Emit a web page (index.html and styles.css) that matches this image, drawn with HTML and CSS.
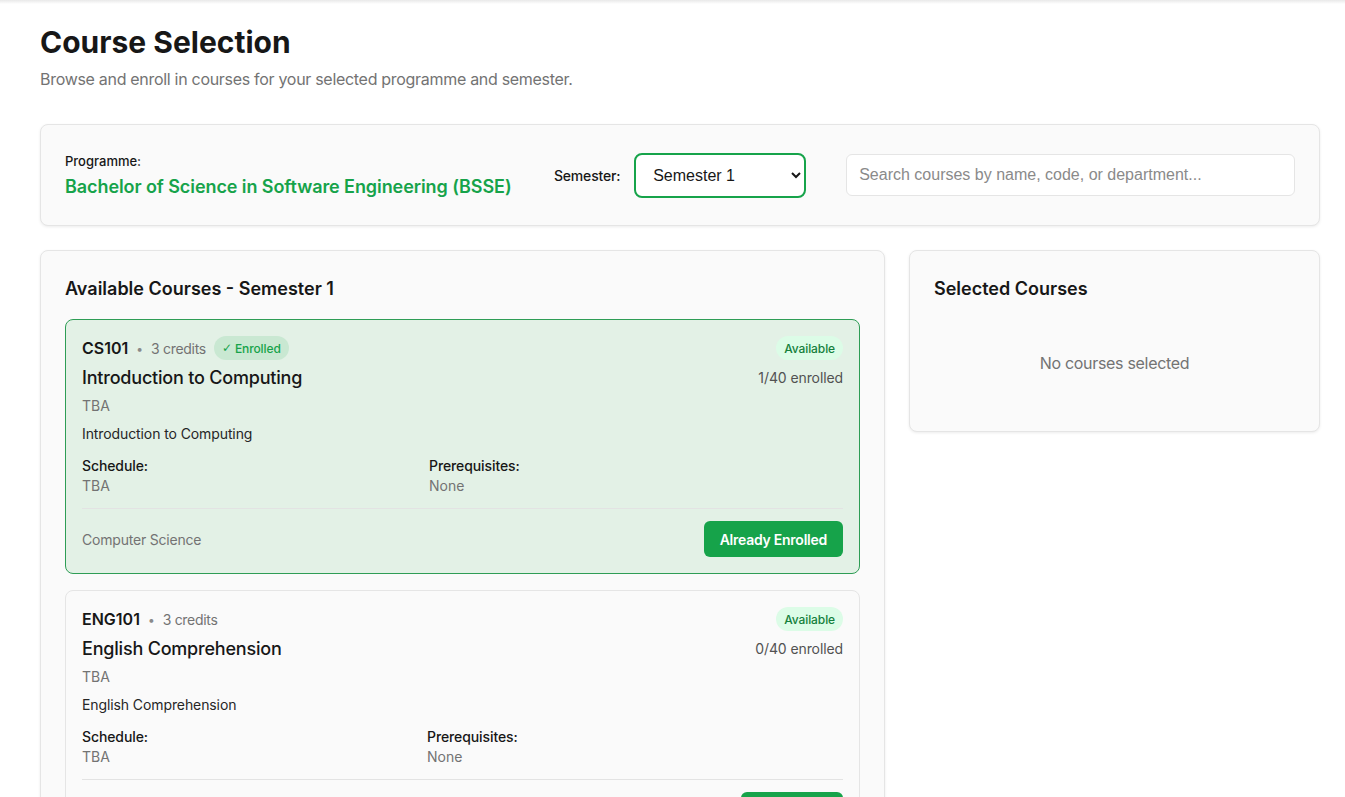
FILE: index.html
```html
<!DOCTYPE html>
<html lang="en">
<head>
<meta charset="utf-8">
<title>Course Selection</title>
<link rel="stylesheet" href="styles.css">
</head>
<body>
<div class="topshade"></div>
<main class="page">
  <h1 class="title">Course Selection</h1>
  <p class="subtitle">Browse and enroll in courses for your selected programme and semester.</p>

  <section class="filters">
    <div class="programme">
      <div class="programme-label">Programme:</div>
      <div class="programme-name">Bachelor of Science in Software Engineering (BSSE)</div>
    </div>
    <div class="semester">
      <label class="semester-label" for="sem">Semester:</label>
      <select id="sem" class="semester-select">
        <option>Semester 1</option>
        <option>Semester 2</option>
      </select>
    </div>
    <input class="search" type="text" placeholder="Search courses by name, code, or department...">
  </section>

  <div class="layout">
    <section class="panel">
      <h2 class="panel-title">Available Courses - Semester 1</h2>
      <div class="course-list">
        <article class="course enrolled">
          <div class="course-head">
            <div class="course-main">
              <div class="code-row">
                <span class="code">CS101</span>
                <span class="dot">•</span>
                <span class="credits">3 credits</span>
                <span class="pill pill-enrolled"><span class="check">✓</span>Enrolled</span>
              </div>
              <div class="course-name">Introduction to Computing</div>
            </div>
            <div class="course-side">
              <span class="pill pill-available">Available</span>
              <div class="count">1/40 enrolled</div>
            </div>
          </div>
          <div class="instructor">TBA</div>
          <div class="desc">Introduction to Computing</div>
          <div class="meta">
            <div class="meta-col">
              <div class="meta-label">Schedule:</div>
              <div class="meta-value">TBA</div>
            </div>
            <div class="meta-col">
              <div class="meta-label">Prerequisites:</div>
              <div class="meta-value">None</div>
            </div>
          </div>
          <div class="course-foot">
            <span class="dept">Computer Science</span>
            <button class="btn">Already Enrolled</button>
          </div>
        </article>

        <article class="course">
          <div class="course-head">
            <div class="course-main">
              <div class="code-row">
                <span class="code">ENG101</span>
                <span class="dot">•</span>
                <span class="credits">3 credits</span>
              </div>
              <div class="course-name">English Comprehension</div>
            </div>
            <div class="course-side">
              <span class="pill pill-available">Available</span>
              <div class="count">0/40 enrolled</div>
            </div>
          </div>
          <div class="instructor">TBA</div>
          <div class="desc">English Comprehension</div>
          <div class="meta meta-alt">
            <div class="meta-col">
              <div class="meta-label">Schedule:</div>
              <div class="meta-value">TBA</div>
            </div>
            <div class="meta-col">
              <div class="meta-label">Prerequisites:</div>
              <div class="meta-value">None</div>
            </div>
          </div>
          <div class="course-foot">
            <span class="dept">Languages</span>
            <button class="btn">Enroll Now</button>
          </div>
        </article>
      </div>
    </section>

    <aside class="panel side-panel">
      <h2 class="panel-title">Selected Courses</h2>
      <p class="empty">No courses selected</p>
    </aside>
  </div>
</main>
</body>
</html>
```

FILE: styles.css
```css
* { box-sizing: border-box; }

html, body {
  margin: 0;
  padding: 0;
  background: #ffffff;
  height: 797px;
  overflow: hidden;
}

body {
  font-family: Inter, "Noto Sans", "Liberation Sans", sans-serif;
  color: #171717;
  position: relative;
}

.topshade {
  position: absolute;
  left: 0;
  right: 0;
  top: 0;
  height: 4px;
  background: linear-gradient(#e9e9e9, rgba(255,255,255,0));
  pointer-events: none;
}

.page {
  padding: 24px 25px 0 40px;
}

.title {
  margin: 0;
  font-size: 30px;
  line-height: 36px;
  font-weight: 700;
  color: #171717;
}

.subtitle {
  margin: 7px 0 0;
  font-size: 16px;
  line-height: 24px;
  letter-spacing: -0.3px;
  color: #737373;
}

.filters {
  margin-top: 33px;
  display: flex;
  align-items: center;
  padding: 24px;
  background: #fafafa;
  border: 1px solid #e5e5e5;
  border-radius: 8px;
  box-shadow: 0 1px 3px rgba(0,0,0,0.08);
  height: 102px;
}

.programme {
  width: 449px;
  flex-shrink: 0;
}

.programme-label {
  font-size: 13px;
  line-height: 24px;
  font-weight: 500;
  color: #171717;
}

.programme-name {
  font-size: 18px;
  line-height: 28px;
  font-weight: 600;
  letter-spacing: -0.08px;
  color: #16a34a;
  white-space: nowrap;
}

.semester {
  margin-left: 40px;
  display: flex;
  align-items: center;
  gap: 14px;
}

.semester-label {
  font-size: 14px;
  font-weight: 500;
  letter-spacing: -0.2px;
  color: #171717;
}

.semester-select {
  width: 172px;
  height: 45px;
  padding: 0 10px 0 13px;
  font-family: "Liberation Sans", Arial, sans-serif;
  font-size: 16px;
  color: #171717;
  background: #ffffff;
  border: 2px solid #16a34a;
  border-radius: 8px;
  outline: none;
}

.search {
  margin-left: 40px;
  flex: 1;
  height: 42px;
  padding: 0 12px;
  font-family: "Liberation Sans", Arial, sans-serif;
  font-size: 16px;
  background: #ffffff;
  border: 1px solid #e5e5e5;
  border-radius: 6px;
  outline: none;
}

.search::placeholder {
  color: #8a8a8a;
}

.layout {
  margin-top: 24px;
  display: grid;
  grid-template-columns: 845px 1fr;
  gap: 24px;
  align-items: start;
}

.panel {
  background: #fafafa;
  border: 1px solid #e5e5e5;
  border-radius: 8px;
  box-shadow: 0 1px 3px rgba(0,0,0,0.08);
  padding: 24px 24px 24px;
}

.panel-title {
  margin: 0;
  font-size: 18px;
  line-height: 28px;
  font-weight: 600;
  color: #171717;
}

.course-list {
  margin-top: 16px;
  display: flex;
  flex-direction: column;
  gap: 16px;
}

.course {
  background: #fafafa;
  border: 1px solid #e5e5e5;
  border-radius: 8px;
  padding: 16px;
}

.course.enrolled {
  background: #e3f1e6;
  border-color: #2e9d55;
}

.course-head {
  display: flex;
  justify-content: space-between;
  align-items: flex-start;
}

.code-row {
  display: flex;
  align-items: center;
  height: 24px;
}

.code {
  font-size: 16px;
  font-weight: 600;
  color: #171717;
}

.dot {
  margin: 0 8px;
  font-size: 12px;
  color: #8a8a8a;
}

.credits {
  font-size: 14px;
  letter-spacing: -0.3px;
  color: #737373;
}

.pill {
  display: inline-flex;
  align-items: center;
  height: 24px;
  padding: 0 8px;
  border-radius: 12px;
  font-size: 12px;
  font-weight: 500;
}

.pill-enrolled {
  margin-left: 8px;
  background: #c9e8d2;
  color: #16a34a;
  letter-spacing: -0.1px;
}

.check {
  font-family: "DejaVu Sans", sans-serif;
  font-size: 12px;
  margin-right: 3px;
}

.pill-available {
  background: #dcfce7;
  color: #15803d;
  letter-spacing: -0.1px;
}

.course-name {
  margin-top: 4px;
  font-size: 18px;
  line-height: 28px;
  font-weight: 500;
  letter-spacing: -0.2px;
  color: #171717;
}

.course-side {
  display: flex;
  flex-direction: column;
  align-items: flex-end;
}

.count {
  margin-top: 8px;
  font-size: 14px;
  line-height: 20px;
  letter-spacing: -0.1px;
  color: #525252;
}

.instructor {
  margin-top: 4px;
  font-size: 14px;
  line-height: 20px;
  color: #737373;
}

.desc {
  margin-top: 8px;
  font-size: 14px;
  line-height: 20px;
  letter-spacing: -0.1px;
  color: #262626;
}

.meta {
  margin-top: 12px;
  display: grid;
  grid-template-columns: 331px 1fr;
  gap: 16px;
}

.meta-alt {
  grid-template-columns: 329px 1fr;
}

.meta-label {
  font-size: 14px;
  line-height: 20px;
  font-weight: 500;
  letter-spacing: -0.1px;
  color: #171717;
}

.meta-value {
  font-size: 14px;
  line-height: 20px;
  color: #737373;
}

.course-foot {
  margin-top: 12px;
  padding-top: 12px;
  border-top: 1px solid #e3e3e3;
  display: flex;
  justify-content: space-between;
  align-items: center;
}

.dept {
  font-size: 14px;
  letter-spacing: -0.2px;
  color: #737373;
}

.btn {
  height: 36px;
  padding: 0 16px;
  border: none;
  border-radius: 6px;
  background: #16a34a;
  color: #ffffff;
  font-family: Inter, "Noto Sans", "Liberation Sans", sans-serif;
  font-size: 14px;
  font-weight: 600;
  letter-spacing: -0.25px;
}

.empty {
  margin: 48px 0 32px;
  text-align: center;
  font-size: 16px;
  line-height: 24px;
  letter-spacing: -0.3px;
  color: #737373;
}
```
